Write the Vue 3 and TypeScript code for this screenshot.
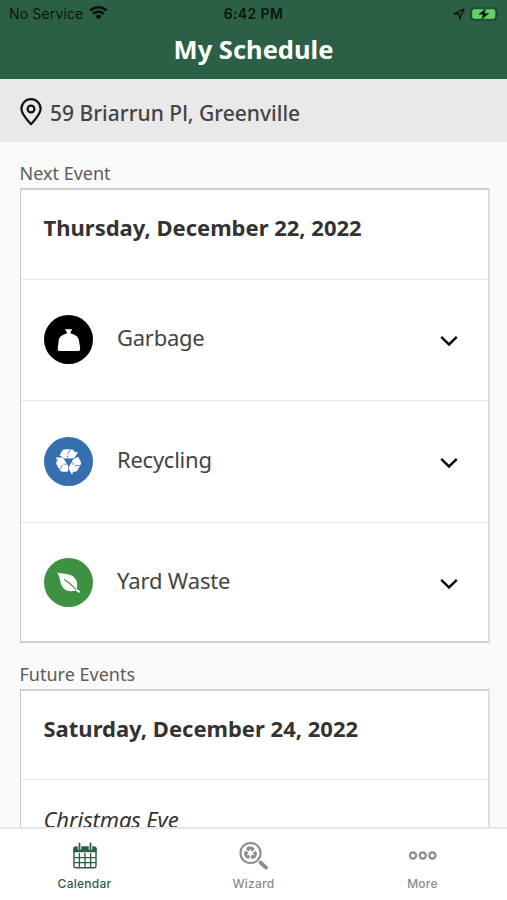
<script setup lang="ts">
type Kind = 'garbage' | 'recycling' | 'yard'

interface Service {
  kind: Kind
  label: string
}

const services: Service[] = [
  { kind: 'garbage', label: 'Garbage' },
  { kind: 'recycling', label: 'Recycling' },
  { kind: 'yard', label: 'Yard Waste' },
]

const recyclePath =
  'M21.82,15.42L19.32,19.75C18.83,20.61 17.92,21.06 17,21H15V23L12.5,18.5L15,14V16H17.82L15.6,12.15L19.93,9.65L21.73,12.77C22.25,13.54 22.32,14.57 21.82,15.42M9.21,3.06H14.21C15.19,3.06 16.04,3.63 16.45,4.45L17.45,6.19L19.18,5.19L16.54,9.6L11.39,9.69L13.12,8.69L11.71,6.24L9.5,10.09L5.16,7.59L6.96,4.47C7.37,3.64 8.22,3.06 9.21,3.06M5.05,19.76L2.55,15.43C2.06,14.58 2.13,13.56 2.64,12.79L3.64,11.06L1.91,10.06L7.05,10.14L9.7,14.56L7.97,13.56L6.56,16H11V21H7.4C6.47,21.07 5.55,20.61 5.05,19.76Z'
</script>

<template>
  <div class="screen">
    <header class="header">
      <div class="status">
        <div class="carrier">
          <span>No Service</span>
          <svg class="wifi" viewBox="0 0 18 14">
            <path d="M1.2 5.2a11.2 11.2 0 0 1 15.6 0" />
            <path d="M4 8.2a7.2 7.2 0 0 1 10 0" />
            <path class="solid" d="M9 13.4 6.1 10.5a4.2 4.2 0 0 1 5.8 0z" />
          </svg>
        </div>
        <span class="clock">6:42 PM</span>
        <div class="power">
          <svg class="locate" viewBox="0 0 12 12">
            <path d="M1 5.8 11 1 6.6 11 6 6z" />
          </svg>
          <svg class="battery" viewBox="0 0 30 14">
            <rect class="shell" x="1" y="1" width="25.4" height="12" rx="3.4" />
            <rect class="charge" x="2.2" y="2.2" width="23" height="9.6" rx="2.2" />
            <path class="cap" d="M27.6 5v4c1.6-.6 1.6-3.4 0-4z" />
            <path class="bolt" d="M16 1.2 8.4 7.6h4.4L11.4 12.8 19.2 6.2h-4.6z" />
          </svg>
        </div>
      </div>
      <h1 class="title">My Schedule</h1>
    </header>

    <div class="address">
      <svg class="pin" viewBox="0 0 22 28">
        <path d="M11 26.2C8 22.7 1.4 16.4 1.4 10.8a9.6 9.6 0 0 1 19.2 0c0 5.6-6.6 11.9-9.6 15.4z" />
        <circle cx="11" cy="11" r="3.4" />
      </svg>
      <span>59 Briarrun Pl, Greenville</span>
    </div>

    <main class="content">
      <h2 class="section">Next Event</h2>
      <section class="card">
        <h3 class="date">Thursday, December 22, 2022</h3>
        <div v-for="s in services" :key="s.kind" class="row">
          <div class="badge" :class="s.kind">
            <svg v-if="s.kind === 'garbage'" viewBox="0 0 49 49">
              <path d="M20.8 13.9q1.8.8 3.7.1 1.9.7 3.7-.1l-1.5 3.2v1.5c4.6.9 7.7 3.3 8.3 6.8l1.2 8.2q.2 2.4-1.4 2.4H15.1q-1.6 0-1.4-2.4l1-8.2c.6-3.5 3.7-5.9 8-6.8v-1.5z" />
            </svg>
            <svg v-else-if="s.kind === 'recycling'" viewBox="0 0 49 49">
              <g transform="translate(10.3 9.3) scale(1.18)">
                <path class="thick" :d="recyclePath" />
                <path class="fold" d="M11.3 6.6 14.2 2.2M17.6 16.2l5.2.4M6.8 15.8l-2.5 4.4" />
              </g>
            </svg>
            <svg v-else viewBox="0 0 49 49">
              <path d="M13.2 14.5c6.5 1.9 15.5.5 18.9 7.4 2 4 .6 6.7 1 9l3.1 2.6-.9 1.6-3.8-2.5c-5 1.3-10.5.4-13.3-4.2-2.8-4.7-1.7-9.4-5-13.9z" />
              <path class="vein" d="M20.2 21.5c5 3 8.5 6.8 12.2 10.3" />
            </svg>
          </div>
          <span class="label">{{ s.label }}</span>
          <svg class="chevron" viewBox="0 0 18 12">
            <path d="M1.2 1.8 9 9.4l7.8-7.6" />
          </svg>
        </div>
      </section>

      <h2 class="section future">Future Events</h2>
      <section class="card">
        <h3 class="date">Saturday, December 24, 2022</h3>
        <div class="row holiday">Christmas Eve</div>
      </section>
    </main>

    <nav class="tabs">
      <a class="tab active">
        <svg viewBox="0 0 30 30">
          <rect x="4" y="6.3" width="22" height="20.5" rx="2" />
          <path d="M9.4 12v15M15 12v15M20.6 12v15M4 16.6h22M4 21.6h22" />
          <path class="fill" d="M3.4 11.2V7.8q0-2.2 2.2-2.2h18.8q2.2 0 2.2 2.2v3.4z" />
          <path class="gap" d="M9.5 2.5v6M20.5 2.5v6" />
          <path class="ring" d="M9.5 2.5v5.2M20.5 2.5v5.2" />
        </svg>
        <span>Calendar</span>
      </a>
      <a class="tab">
        <svg viewBox="0 0 30 30">
          <circle class="lens" cx="11.5" cy="12" r="10.1" />
          <g transform="translate(3.5 3.6) scale(.66)">
            <path class="fill" :d="recyclePath" />
          </g>
          <path class="handle" d="m21.5 21.5 5.5 5.2" />
        </svg>
        <span>Wizard</span>
      </a>
      <a class="tab">
        <svg viewBox="0 0 30 30">
          <g class="dots">
            <circle cx="5" cy="14.5" r="3.1" />
            <circle cx="14.7" cy="14.5" r="3.1" />
            <circle cx="24.4" cy="14.5" r="3.1" />
          </g>
        </svg>
        <span>More</span>
      </a>
    </nav>
  </div>
</template>

<style>
body {
  margin: 0;
  background: #fafafa;
}
</style>

<style scoped>
.screen {
  width: 507px;
  height: 900px;
  display: flex;
  flex-direction: column;
  overflow: hidden;
  background: #fafafa;
  color: #333;
  font-family: 'Noto Sans', 'Open Sans', sans-serif;
}
svg {
  display: block;
  fill: none;
}
h1,
h2,
h3 {
  margin: 0;
}
.header {
  flex: none;
  height: 79px;
  background: #2b6046;
}
.status {
  height: 28px;
  padding: 0 9px;
  display: grid;
  grid-template-columns: 1fr auto 1fr;
  align-items: center;
  font: 14px/28px Inter, sans-serif;
  color: #09160f;
}
.carrier {
  display: flex;
  align-items: center;
  gap: 6px;
  letter-spacing: 0.15px;
}
.wifi {
  width: 19px;
  height: 15px;
  margin-top: -3px;
  stroke: #07100b;
  stroke-width: 2.5;
}
.wifi .solid {
  fill: #07100b;
  stroke: none;
}
.clock {
  font-weight: 600;
  letter-spacing: 0.4px;
}
.power {
  display: flex;
  justify-content: flex-end;
  align-items: center;
  gap: 5px;
}
.locate {
  width: 12px;
  height: 12px;
  stroke: #07100b;
  stroke-width: 1.3;
  stroke-linejoin: round;
}
.battery {
  width: 30px;
  height: 14px;
  margin-right: -2px;
}
.shell {
  stroke: #1b3f2c;
  stroke-width: 1.2;
}
.charge {
  fill: #63d168;
}
.cap {
  fill: #1b3f2c;
}
.bolt {
  fill: #07100b;
  stroke: #2f7447;
  stroke-width: 0.5;
}
.title {
  font-size: 25.5px;
  line-height: 43px;
  font-weight: 700;
  text-align: center;
  color: #fff;
}
.address {
  flex: none;
  height: 63px;
  padding: 5px 20px 0;
  box-sizing: border-box;
  display: flex;
  align-items: center;
  gap: 8px;
  background: #e9e9e9;
  color: #444;
  font-size: 21px;
  font-weight: 500;
}
.pin {
  width: 22px;
  height: 28px;
  margin-top: -3px;
  stroke: #111;
  stroke-width: 2.2;
  stroke-linejoin: round;
}
.content {
  flex: 1;
  min-height: 0;
  overflow: hidden;
  padding: 0 17px 0 20px;
}
.section {
  height: 46px;
  margin-left: -0.5px;
  font-size: 18px;
  line-height: 62px;
  font-weight: 400;
  color: #5c5c5c;
}
.card {
  box-sizing: border-box;
  background: #fff;
  border: 2px solid #d0d0d0;
  border-left: 1px solid #c8c8c8;
  border-right-color: #dedede;
}
.date {
  height: 88.75px;
  padding-left: 22.5px;
  font-size: 22px;
  line-height: 75px;
  font-weight: 700;
  color: #333;
}
.row {
  height: 121.5px;
  box-sizing: border-box;
  border-top: 1px solid #e8e8e8;
  padding: 0 30px 0 22.5px;
  display: flex;
  align-items: center;
}
.row:last-child {
  height: 119.25px;
}
.badge {
  width: 49px;
  height: 49px;
  margin-top: -1px;
  border-radius: 50%;
}
.row:last-child .badge {
  margin-top: 1px;
}
.badge svg {
  width: 49px;
  height: 49px;
  fill: #fff;
}
.garbage {
  background: #000;
}
.recycling {
  background: #356fae;
}
.yard {
  background: #3e9142;
}
.thick {
  stroke: #fff;
  stroke-width: 1.2;
  stroke-linejoin: round;
}
.fold {
  stroke: #356fae;
  stroke-width: 0.7;
}
.vein {
  fill: none;
  stroke: #3e9142;
  stroke-width: 1.1;
}
.label {
  flex: 1;
  margin: -6px 0 0 24.5px;
  font-size: 22px;
  letter-spacing: -0.25px;
  color: #444;
}
.row:last-child .label {
  margin-top: -3px;
  letter-spacing: -0.15px;
}
.chevron {
  width: 18px;
  height: 12px;
  margin-top: 2px;
  stroke: #111;
  stroke-width: 2.5;
}
.row:last-child .chevron {
  margin-top: 4px;
}
.future {
  height: 45.5px;
}
.card .holiday:last-child {
  height: 121px;
  align-items: flex-start;
  padding-top: 22px;
  font-size: 22px;
  line-height: 34px;
  letter-spacing: -0.1px;
  font-style: italic;
}
.tabs {
  flex: none;
  height: 73px;
  box-sizing: border-box;
  border-top: 2px solid #e8e8e8;
  background: #fff;
  display: grid;
  grid-template-columns: repeat(3, 1fr);
}
.tab {
  padding-top: 12px;
  display: flex;
  flex-direction: column;
  align-items: center;
  gap: 3px;
  color: #8b8b8b;
  font: 500 12px/20px Inter, sans-serif;
  letter-spacing: 0.25px;
}
.tab svg {
  width: 30px;
  height: 30px;
  stroke: currentColor;
  stroke-width: 1.4;
}
.tab.active {
  color: #2b6046;
}
.tab .fill {
  fill: currentColor;
  stroke: none;
}
.tab .gap {
  stroke: #fff;
  stroke-width: 3.6;
}
.tab .ring {
  stroke-width: 1.8;
  stroke-linecap: round;
}
.tab .lens {
  stroke-width: 2;
}
.tab .handle {
  stroke-width: 3.8;
  stroke-linecap: round;
}
.tab .dots {
  stroke-width: 2.2;
}
</style>
